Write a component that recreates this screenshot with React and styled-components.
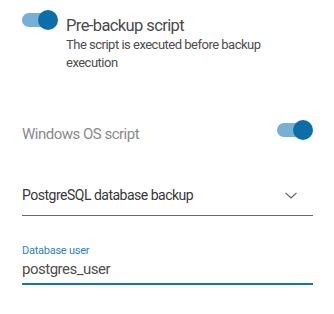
import React from "react";
import styled, { createGlobalStyle } from "styled-components";

const Global = createGlobalStyle`
  html, body { margin: 0; padding: 0; background: #fff; }
  body { font-family: Roboto, "Noto Sans", sans-serif; letter-spacing: -0.5px; }
`;

const Page = styled.div`
  width: 334px;
  height: 314px;
  box-sizing: border-box;
  padding: 13px 21px 0 22px;
  display: flex;
  flex-direction: column;
`;

const ToggleTrack = styled.div`
  position: relative;
  width: 33px;
  height: 14px;
  border-radius: 7px;
  background: #78afd4;
  flex: none;
  margin-top: ${(p) => p.$mt || 0}px;
  margin-right: ${(p) => p.$mr || 0}px;
`;

const Thumb = styled.div`
  position: absolute;
  right: -3px;
  top: -3px;
  width: 20px;
  height: 20px;
  border-radius: 50%;
  background: #0c6ea8;
`;

const Toggle = ({ mt, mr }) => (
  <ToggleTrack $mt={mt} $mr={mr}>
    <Thumb />
  </ToggleTrack>
);

const HeaderRow = styled.div`
  display: flex;
  align-items: flex-start;
  gap: 11px;
`;

const HeaderText = styled.div`
  display: flex;
  flex-direction: column;
  margin-top: 3px;
`;

const Title = styled.div`
  font-size: 16.5px;
  line-height: 20px;
  letter-spacing: -0.6px;
  color: #4a4a4a;
`;

const Desc = styled.div`
  font-size: 13px;
  line-height: 18px;
  color: #4e4e4e;
`;

const SwitchRow = styled.div`
  display: flex;
  align-items: flex-start;
  justify-content: space-between;
  margin-top: 52px;
`;

const SwitchLabel = styled.div`
  font-size: 15px;
  line-height: 20px;
  color: #8a8a8a;
`;

const Select = styled.div`
  margin-top: 41px;
  padding: 0 16px 10px 0;
  border-bottom: 1px solid #6a6a6a;
  display: flex;
  align-items: center;
  justify-content: space-between;
`;

const SelectValue = styled.div`
  font-size: 14px;
  line-height: 20px;
  color: #383838;
`;

const Field = styled.div`
  margin-top: 28px;
  border-bottom: 2px solid #1676ab;
  display: flex;
  flex-direction: column;
  padding-bottom: 4px;
`;

const FieldLabel = styled.div`
  font-size: 11px;
  line-height: 14px;
  letter-spacing: -0.25px;
  color: #2b85b9;
`;

const FieldValue = styled.div`
  margin-top: 1px;
  font-size: 15px;
  line-height: 20px;
  color: #4e4e4e;
`;

export default function App() {
  return (
    <>
      <Global />
      <Page>
        <HeaderRow>
          <Toggle />
          <HeaderText>
            <Title>Pre-backup script</Title>
            <Desc>
              The script is executed before backup
              <br />
              execution
            </Desc>
          </HeaderText>
        </HeaderRow>
        <SwitchRow>
          <SwitchLabel>Windows OS script</SwitchLabel>
          <Toggle mt={-1} mr={3} />
        </SwitchRow>
        <Select>
          <SelectValue>PostgreSQL database backup</SelectValue>
          <svg width="12" height="7" viewBox="0 0 12 7">
            <path d="M0.5 0.8 L6 6 L11.5 0.8" fill="none" stroke="#5a5a5a" strokeWidth="1.1" />
          </svg>
        </Select>
        <Field>
          <FieldLabel>Database user</FieldLabel>
          <FieldValue>postgres_user</FieldValue>
        </Field>
      </Page>
    </>
  );
}
